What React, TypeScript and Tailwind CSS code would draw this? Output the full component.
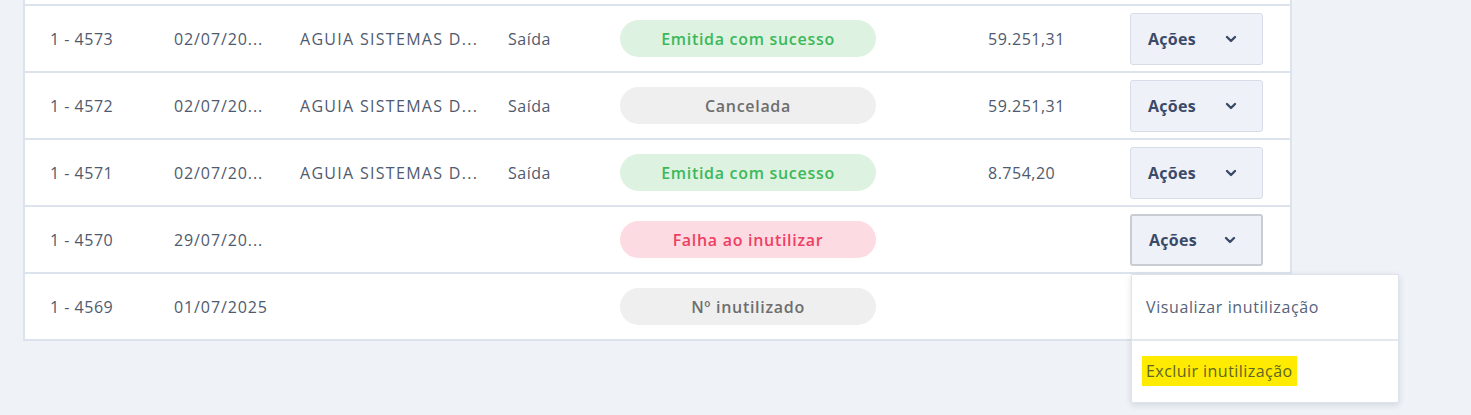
import React from 'react';

type Status = 'ok' | 'cancel' | 'fail' | 'void';

interface Row {
  id: string;
  date: string;
  company: string;
  type: string;
  status: Status;
  value: string;
  open?: boolean;
}

const rows: Row[] = [
  { id: '1 - 4573', date: '02/07/20...', company: 'AGUIA SISTEMAS D...', type: 'Saída', status: 'ok', value: '59.251,31' },
  { id: '1 - 4572', date: '02/07/20...', company: 'AGUIA SISTEMAS D...', type: 'Saída', status: 'cancel', value: '59.251,31' },
  { id: '1 - 4571', date: '02/07/20...', company: 'AGUIA SISTEMAS D...', type: 'Saída', status: 'ok', value: '8.754,20' },
  { id: '1 - 4570', date: '29/07/20...', company: '', type: '', status: 'fail', value: '', open: true },
  { id: '1 - 4569', date: '01/07/2025', company: '', type: '', status: 'void', value: '' },
];

const badge = (s: Status) => {
  switch (s) {
    case 'ok': return { cls: 'bg-[#ddf2e1] text-[#3cb85a]', label: 'Emitida com sucesso' };
    case 'cancel': return { cls: 'bg-[#efefef] text-[#6e6e6e]', label: 'Cancelada' };
    case 'fail': return { cls: 'bg-[#fddbe2] text-[#ef3f62]', label: 'Falha ao inutilizar' };
    default: return { cls: 'bg-[#efefef] text-[#6e6e6e]', label: 'Nº inutilizado' };
  }
};

const Chevron = () => (
  <svg width="12" height="8" viewBox="0 0 12 8" fill="none">
    <path d="M2 2l4 4 4-4" stroke="#3b4a68" strokeWidth="2.4" strokeLinecap="round" strokeLinejoin="round" />
  </svg>
);

const Actions: React.FC<{ open?: boolean }> = ({ open }) => (
  <div className="relative">
    <button
      className={`flex h-[52px] w-[133px] items-center justify-between rounded-[3px] bg-[#eef2f8] pl-[17px] pr-[25px] text-[16px] font-bold tracking-[0.3px] text-[#3b4a68] ${
        open ? 'border-2 border-[#c9cdd3]' : 'border border-[#d6dde8]'
      }`}
    >
      <span>Ações</span>
      <Chevron />
    </button>
    {open && (
      <div className="absolute left-[1px] top-[60px] z-10 w-[268px] rounded-[2px] border border-[#dde3ec] bg-white shadow-[0_2px_6px_rgba(40,60,90,0.15)]">
        <div className="flex h-[66px] items-center border-b-2 border-[#e3e8ef] px-[14px] text-[16px] tracking-[0.6px] text-[#56627a]">
          Visualizar inutilização
        </div>
        <div className="flex h-[61px] items-center px-[10px] text-[16px] tracking-[0.45px] text-[#5d6628]">
          <span className="bg-[#ffeb00] px-[4px] py-[3px]">Excluir inutilização</span>
        </div>
      </div>
    )}
  </div>
);

export default function App() {
  return (
    <div className="h-[415px] w-[1471px] overflow-hidden bg-[#eff2f7] font-['Open_Sans','Liberation_Sans',sans-serif]">
      <div className="ml-[23px] w-[1269px] border-x-2 border-b-2 border-[#dce3ec] bg-white">
        <div className="h-[4px]" />
        {rows.map((r) => {
          const b = badge(r.status);
          return (
            <div key={r.id} className="flex h-[67px] items-center border-t-2 border-[#dce3ec] text-[16px] tracking-[0.5px] text-[#4f5a6e]">
              <div className="w-[149px] pl-[25px]">{r.id}</div>
              <div className="w-[126px] tracking-[0.9px]">{r.date}</div>
              <div className="w-[208px] tracking-[1.3px]">{r.company}</div>
              <div className="w-[112px]">{r.type}</div>
              <div className="w-[368px]">
                <div className={`flex h-[37px] w-[256px] items-center justify-center rounded-full text-[16px] font-semibold tracking-[0.7px] ${b.cls}`}>
                  {b.label}
                </div>
              </div>
              <div className="w-[142px]">{r.value}</div>
              <div>{r.status === 'void' ? null : <Actions open={r.open} />}</div>
            </div>
          );
        })}
      </div>
    </div>
  );
}
